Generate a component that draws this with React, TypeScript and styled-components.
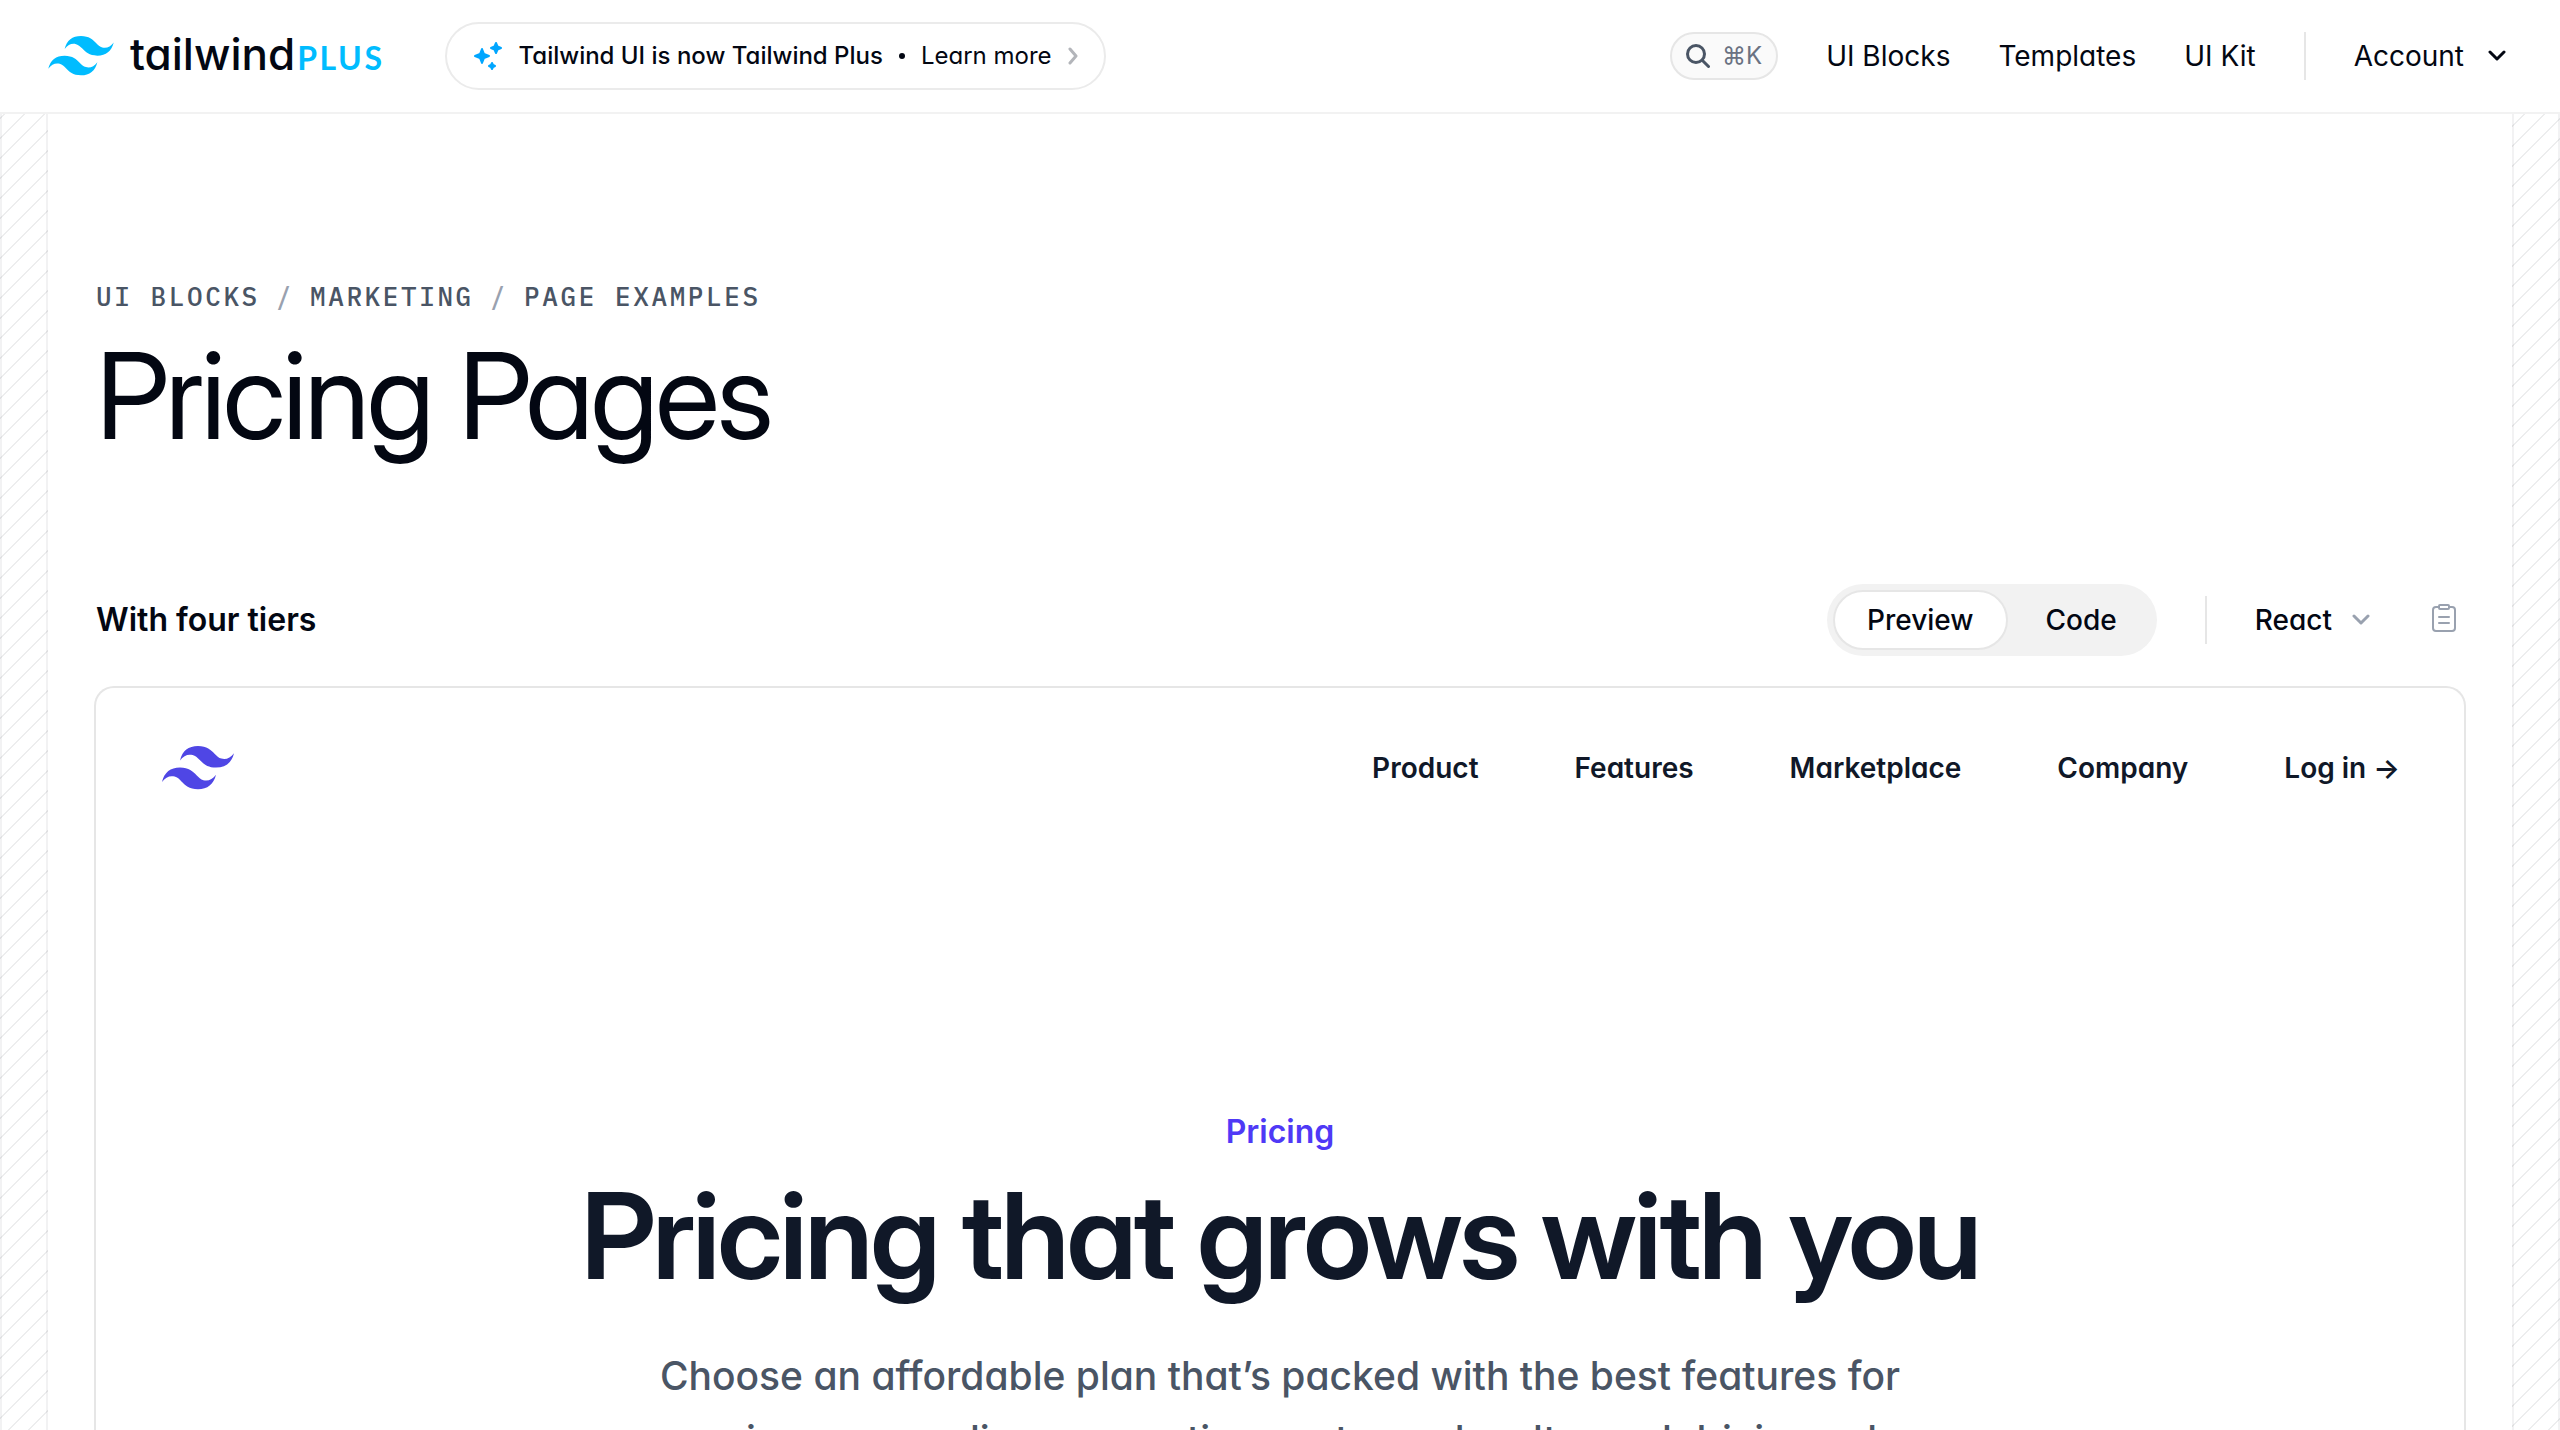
import React from "react";
import styled, { createGlobalStyle } from "styled-components";

const Global = createGlobalStyle`
  *, *::before, *::after { box-sizing: border-box; }
  html { background: #fff; }
  body {
    margin: 0;
    height: 100vh;
    overflow: hidden;
    font-family: Inter, "Liberation Sans", sans-serif;
    font-feature-settings: "cv11";
    color: #030712;
    -webkit-font-smoothing: antialiased;
  }
  #root { height: 100%; }
  h1, h2, p { margin: 0; }
  a { color: inherit; text-decoration: none; }
  button { font: inherit; font-feature-settings: inherit; color: inherit; background: none; border: 0; padding: 0; cursor: pointer; }
  svg { display: block; flex: none; }
`;

const display = `"Inter Display", Inter, "Liberation Sans", sans-serif`;

const Page = styled.div`
  display: flex;
  flex-direction: column;
  min-height: 100%;
`;

const Header = styled.header`
  display: flex;
  align-items: center;
  gap: 60px;
  flex: none;
  height: 114px;
  padding: 0 54px 0 48px;
  border-bottom: 2px solid #f2f2f2;
`;

const Brand = styled.a`
  display: flex;
  align-items: center;
  gap: 16px;
`;

const Wordmark = styled.span`
  display: flex;
  align-items: baseline;
  gap: 2px;
  font-size: 44px;
  line-height: 48px;
  font-weight: 500;
`;

const Plus = styled.span`
  font-family: Lato, "Liberation Sans", sans-serif;
  font-size: 32px;
  font-weight: 700;
  letter-spacing: 0.08em;
  color: #00bcff;
`;

const Banner = styled.a`
  display: flex;
  align-items: center;
  height: 68px;
  padding: 0 26px;
  border: 2px solid #ebebeb;
  border-radius: 34px;
  font-size: 24px;
  line-height: 32px;
  white-space: nowrap;
`;

const BannerTitle = styled.span`
  margin-left: 16px;
  font-weight: 500;
`;

const BannerDot = styled.span`
  width: 6px;
  height: 6px;
  margin: 0 16px;
  border-radius: 50%;
  background: #030712;
`;

const BannerLink = styled.span`
  margin-right: 16px;
`;

const Nav = styled.nav`
  display: flex;
  align-items: center;
  gap: 48px;
  margin-left: auto;
  font-size: 28px;
  line-height: 40px;
  white-space: nowrap;
`;

const SearchButton = styled.button`
  display: flex;
  align-items: center;
  gap: 12px;
  height: 48px;
  padding: 0 14px;
  border: 2px solid #e6e6e6;
  border-radius: 24px;
  background: #fafafa;
  font-size: 24px;
  color: #6a7282;
`;

const Divider = styled.span`
  width: 2px;
  height: 48px;
  background: #e6e6e6;
`;

const MenuButton = styled.button<{ $gap: number }>`
  display: flex;
  align-items: center;
  gap: ${(p) => p.$gap}px;
`;

const Body = styled.div`
  display: grid;
  grid-template-columns: 48px minmax(0, 1fr) 48px;
  flex: 1;
`;

const Gutter = styled.div`
  border: solid rgba(3, 7, 18, 0.05);
  border-width: 0 2px;
  background-image: repeating-linear-gradient(315deg, rgba(3, 7, 18, 0.07) 0 2px, transparent 0 50%);
  background-size: 20px 20px;
  background-attachment: fixed;
`;

const Main = styled.main`
  display: flex;
  flex-direction: column;
  padding: 166px 46px 0;
`;

const Crumbs = styled.nav`
  display: flex;
  gap: 16px;
  padding-left: 2px;
  font-family: "IBM Plex Mono", "Liberation Mono", monospace;
  font-size: 26px;
  line-height: 32px;
  font-weight: 500;
  letter-spacing: 0.1em;
  text-transform: uppercase;
  color: #4a5565;
`;

const Slash = styled.span`
  color: #99a1af;
`;

const Title = styled.h1`
  margin-top: 24px;
  padding-left: 2px;
  font-family: ${display};
  font-size: 120px;
  line-height: 120px;
  font-weight: 400;
  letter-spacing: -0.025em;
`;

const Toolbar = styled.div`
  display: flex;
  align-items: center;
  justify-content: space-between;
  margin-top: 128px;
  padding: 0 2px;
`;

const SectionTitle = styled.h2`
  font-size: 32px;
  line-height: 48px;
  font-weight: 600;
`;

const Tools = styled.div`
  display: flex;
  align-items: center;
  gap: 48px;
  padding-right: 8px;
  font-size: 28px;
  line-height: 40px;
  font-weight: 500;
`;

const Tabs = styled.div`
  display: flex;
  gap: 4px;
  padding: 6px;
  border-radius: 36px;
  background: #f2f2f2;
`;

const Tab = styled.button<{ $active?: boolean }>`
  height: 60px;
  padding: 0 32px;
  border: 2px solid ${(p) => (p.$active ? "#e6e6e6" : "transparent")};
  border-radius: 30px;
  background: ${(p) => (p.$active ? "#fff" : "transparent")};
`;

const CopyButton = styled.button`
  margin-left: 14px;
`;

const Frame = styled.section`
  flex: 1;
  margin-top: 30px;
  border: 2px solid #e6e6e6;
  border-bottom: 0;
  border-radius: 20px 20px 0 0;
  color: #101828;
`;

const FrameNav = styled.nav`
  display: flex;
  align-items: center;
  justify-content: space-between;
  padding: 56px 64px 56px 66px;
`;

const FrameLinks = styled.div`
  display: flex;
  gap: 96px;
  font-size: 28px;
  line-height: 48px;
  font-weight: 600;
`;

const Hero = styled.div`
  padding-top: 256px;
  text-align: center;
`;

const Eyebrow = styled.p`
  font-size: 32px;
  line-height: 56px;
  font-weight: 600;
  color: #4f39f6;
`;

const Headline = styled.h2`
  margin-top: 16px;
  font-family: ${display};
  font-size: 120px;
  line-height: 120px;
  font-weight: 600;
  letter-spacing: -0.025em;
`;

const Lede = styled.p`
  max-width: 1344px;
  margin: 48px auto 0;
  font-size: 39px;
  line-height: 64px;
  font-weight: 500;
  color: #4a5565;
`;

const waves =
  "M27 0C19.8 0 15.3 3.6 13.5 10.8C16.2 7.2 19.35 5.85 22.95 6.75C25.004 7.263 26.472 8.754 28.097 10.403C30.744 13.09 33.808 16.2 40.5 16.2C47.7 16.2 52.2 12.6 54 5.4C51.3 9 48.15 10.35 44.55 9.45C42.496 8.937 41.028 7.446 39.403 5.797C36.756 3.11 33.692 0 27 0ZM13.5 16.2C6.3 16.2 1.8 19.8 0 27C2.7 23.4 5.85 22.05 9.45 22.95C11.504 23.464 12.972 24.954 14.597 26.603C17.244 29.29 20.308 32.4 27 32.4C34.2 32.4 38.7 28.8 40.5 21.6C37.8 25.2 34.65 26.55 31.05 25.65C28.996 25.137 27.528 23.646 25.903 21.997C23.256 19.31 20.192 16.2 13.5 16.2Z";

function Waves({ width, height, fill }: { width: number; height: number; fill: string }) {
  return (
    <svg width={width} height={height} viewBox="0 0 54 33" fill={fill} aria-hidden="true">
      <path fillRule="evenodd" clipRule="evenodd" d={waves} />
    </svg>
  );
}

function Chevron({ color }: { color: string }) {
  return (
    <svg width={18} height={12} viewBox="0 0 18 12" fill="none" stroke={color} strokeWidth="3" strokeLinecap="round" strokeLinejoin="round" aria-hidden="true">
      <path d="M2 2l7 7 7-7" />
    </svg>
  );
}

function Sparkles() {
  return (
    <svg width="30" height="30" viewBox="0 0 30 30" fill="#00a6ff" stroke="#00a6ff" strokeWidth="2" strokeLinejoin="round" aria-hidden="true">
      <path d="M9 8l2 5 5 2-5 2-2 5-2-5-5-2 5-2z" />
      <path d="M23 2l1.500 3.500 3.500 1.500-3.500 1.500L23 12l-1.500-3.500L18 7l3.500-1.500z" />
      <path d="M19 22l1 2 2 1-2 1-1 2-1-2-2-1 2-1z" />
    </svg>
  );
}

const links = ["Product", "Features", "Marketplace", "Company"];

export default function App() {
  return (
    <>
      <Global />
      <Page>
        <Header>
          <Brand href="#" aria-label="Tailwind Plus">
            <Waves width={66} height={40} fill="#00bcff" />
            <Wordmark>
              tailwind<Plus>PLUS</Plus>
            </Wordmark>
          </Brand>
          <Banner href="#">
            <Sparkles />
            <BannerTitle>Tailwind UI is now Tailwind Plus</BannerTitle>
            <BannerDot />
            <BannerLink>Learn more</BannerLink>
            <svg width="10" height="18" viewBox="0 0 10 18" fill="none" stroke="#b3b5ba" strokeWidth="3" strokeLinecap="round" strokeLinejoin="round" aria-hidden="true">
              <path d="M2 2l6 7-6 7" />
            </svg>
          </Banner>
          <Nav>
            <SearchButton aria-label="Search">
              <svg width="24" height="24" viewBox="0 0 24 24" fill="none" stroke="#4a5565" strokeWidth="3" strokeLinecap="round" aria-hidden="true">
                <circle cx="10" cy="10" r="8.500" />
                <path d="M16.500 16.500l6 6" />
              </svg>
              <span>⌘K</span>
            </SearchButton>
            <a href="#">UI Blocks</a>
            <a href="#">Templates</a>
            <a href="#">UI Kit</a>
            <Divider />
            <MenuButton $gap={24}>
              Account <Chevron color="#030712" />
            </MenuButton>
          </Nav>
        </Header>
        <Body>
          <Gutter />
          <Main>
            <Crumbs aria-label="Breadcrumb">
              <a href="#">UI Blocks</a>
              <Slash>/</Slash>
              <a href="#">Marketing</a>
              <Slash>/</Slash>
              <a href="#">Page Examples</a>
            </Crumbs>
            <Title>Pricing Pages</Title>
            <Toolbar>
              <SectionTitle>With four tiers</SectionTitle>
              <Tools>
                <Tabs role="tablist">
                  <Tab role="tab" aria-selected="true" $active>Preview</Tab>
                  <Tab role="tab" aria-selected="false">Code</Tab>
                </Tabs>
                <Divider />
                <MenuButton $gap={20}>
                  React <Chevron color="#99a1af" />
                </MenuButton>
                <CopyButton aria-label="Copy code">
                  <svg width="24" height="32" viewBox="0 0 24 32" fill="none" stroke="#99a1af" strokeWidth="2" strokeLinejoin="round" strokeLinecap="round" aria-hidden="true">
                    <path d="M7 3H4a3 3 0 0 0-3 3v18a3 3 0 0 0 3 3h16a3 3 0 0 0 3-3V6a3 3 0 0 0-3-3h-3M8 1h8a1 1 0 0 1 1 1v2a1 1 0 0 1-1 1H8a1 1 0 0 1-1-1V2a1 1 0 0 1 1-1zM7 13h10M7 19h10" />
                  </svg>
                </CopyButton>
              </Tools>
            </Toolbar>
            <Frame>
              <FrameNav>
                <a href="#" aria-label="Your Company">
                  <Waves width={72} height={44} fill="#4f46e5" />
                </a>
                <FrameLinks>
                  {links.map((l) => (
                    <a href="#" key={l}>{l}</a>
                  ))}
                  <a href="#">Log in →</a>
                </FrameLinks>
              </FrameNav>
              <Hero>
                <Eyebrow>Pricing</Eyebrow>
                <Headline>Pricing that grows with you</Headline>
                <Lede>
                  Choose an affordable plan that’s packed with the best features for engaging your audience,
                  creating customer loyalty, and driving sales.
                </Lede>
              </Hero>
            </Frame>
          </Main>
          <Gutter />
        </Body>
      </Page>
    </>
  );
}
